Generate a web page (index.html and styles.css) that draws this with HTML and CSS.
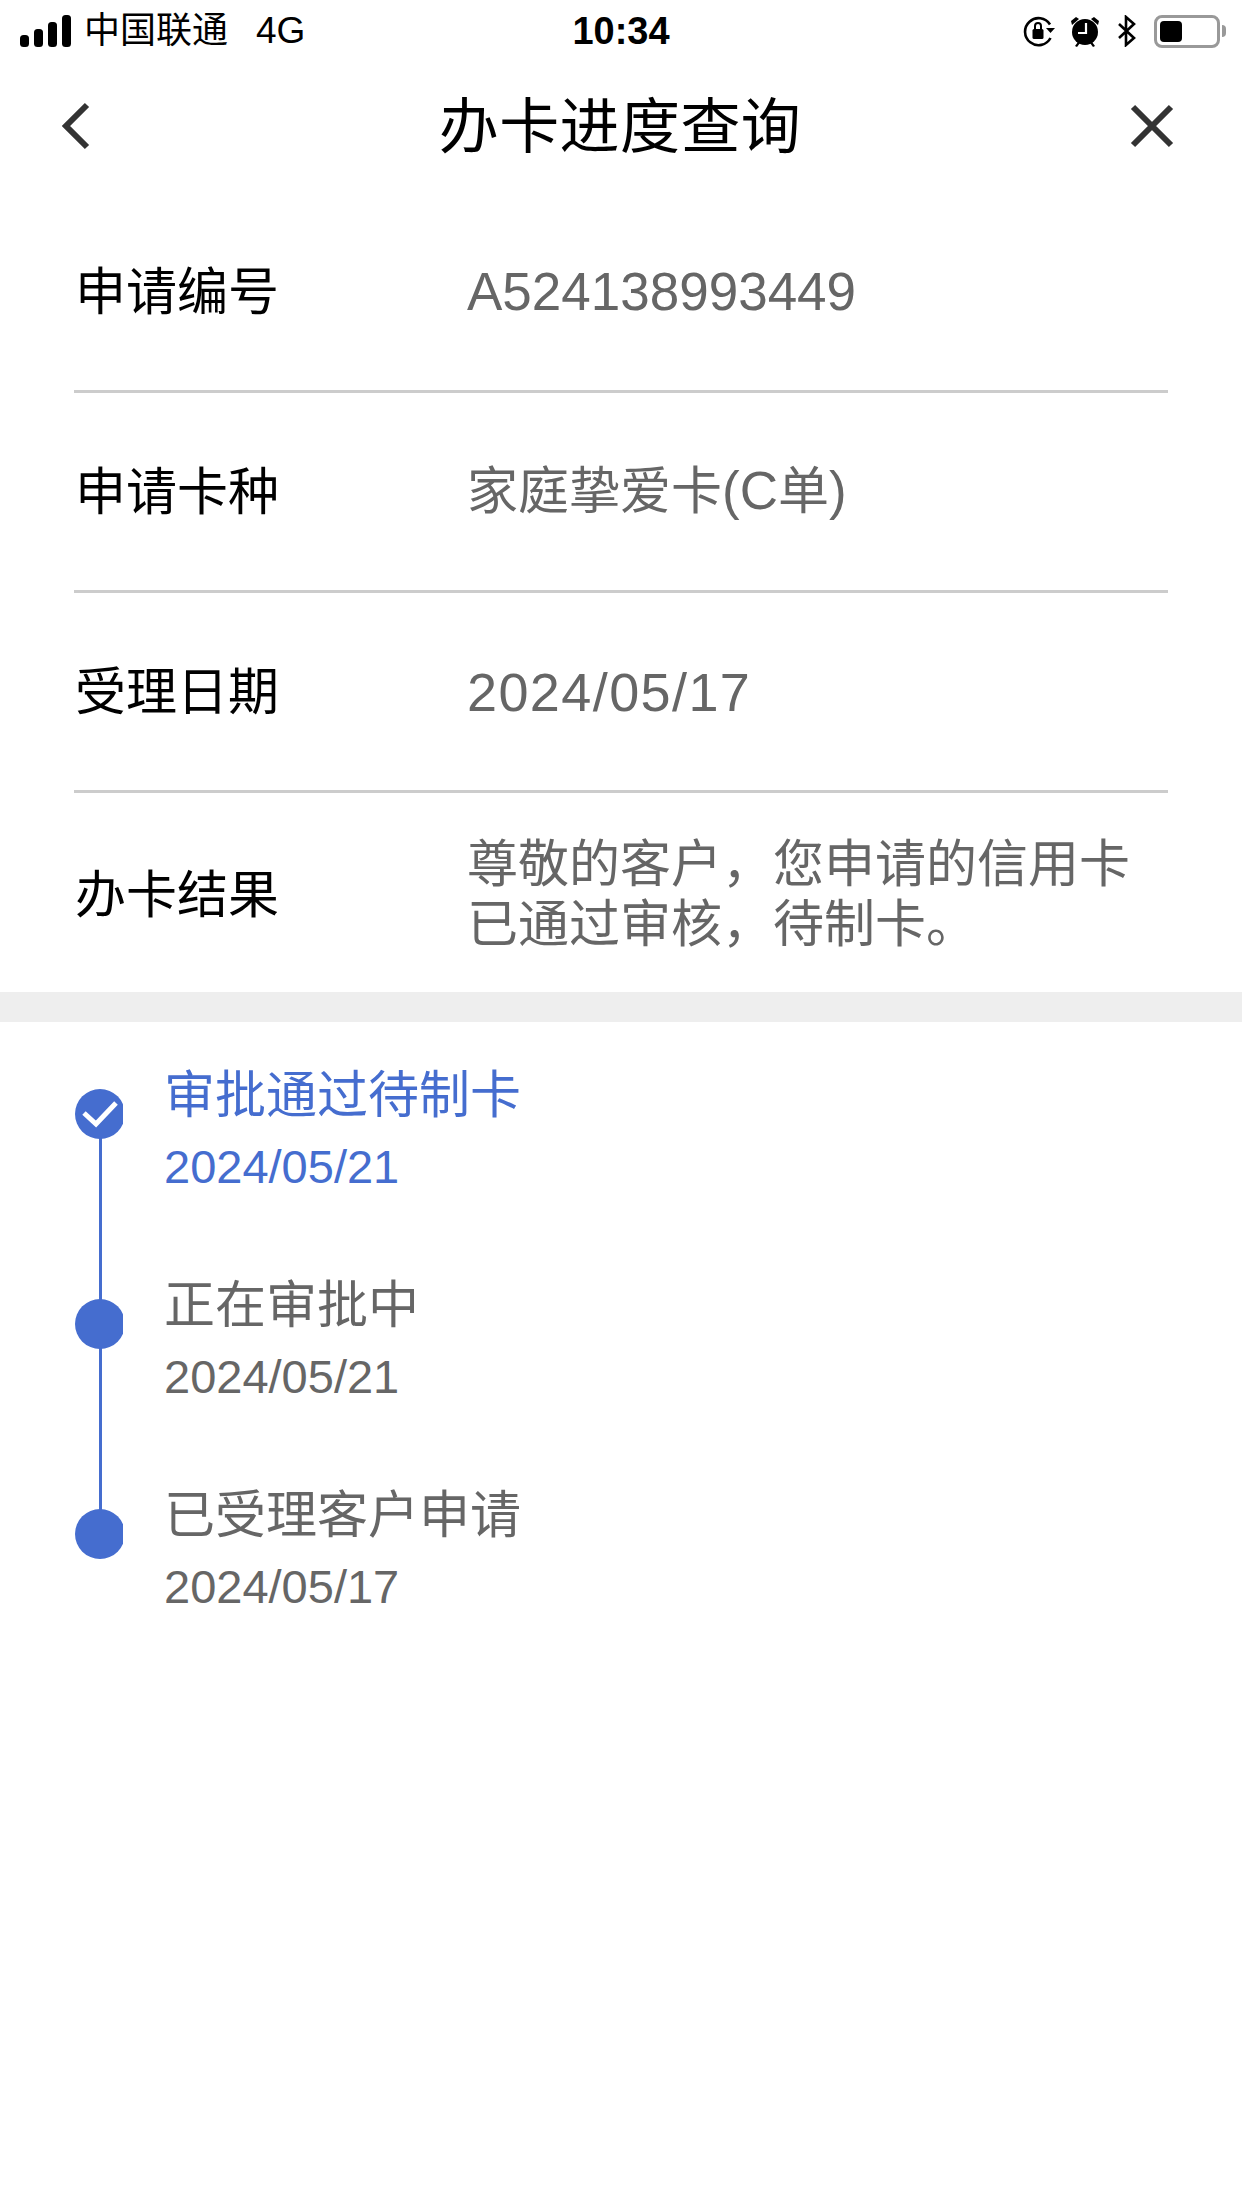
FILE: index.html
```html
<!DOCTYPE html>
<html lang="zh-CN">
<head>
<meta charset="utf-8">
<title>办卡进度查询</title>
<link rel="stylesheet" href="styles.css">
</head>
<body>
<div class="status">
  <div class="status-left">
    <svg class="signal" width="52" height="32" viewBox="0 0 52 32"><rect x="0" y="20" width="9" height="12" rx="3.5"/><rect x="14" y="14" width="9" height="18" rx="3.5"/><rect x="28" y="7" width="9" height="25" rx="3.5"/><rect x="42" y="0" width="9" height="32" rx="3.5"/></svg>
    <span class="carrier">中国联通</span><span class="net">4G</span>
  </div>
  <div class="clock">10:34</div>
  <div class="status-right">
    <svg class="ic-lock" width="32" height="32" viewBox="0 0 32 32"><path d="M27 9.500A13.500 13.500 0 1 0 27.500 23" fill="none" stroke="#000" stroke-width="2.600"/><path d="M23 13h9l-4.500 5z"/><rect x="9.500" y="14" width="11" height="10" rx="1.500"/><path d="M12 14v-3a3 3 0 0 1 6 0v3" fill="none" stroke="#000" stroke-width="2"/></svg>
    <svg class="ic-alarm" width="30" height="32" viewBox="0 0 30 32"><circle cx="15" cy="17" r="13"/><path d="M1 6l5-4 3 2-7 6zM29 6l-5-4-3 2 7 6zM5 31l3-4 2 1-3 4zM25 31l-3-4-2 1 3 4z"/><path d="M16 8v10H8" fill="none" stroke="#fff" stroke-width="2.200"/></svg>
    <svg class="ic-bt" width="20" height="32" viewBox="0 0 20 32"><path d="M2 9l15 14-8 7V2l8 7L2 23" fill="none" stroke="#000" stroke-width="2.600"/></svg>
    <div class="battery"><div class="battery-body"><div class="battery-fill"></div></div><div class="battery-tip"></div></div>
  </div>
</div>

<div class="nav">
  <svg class="nav-back" width="30" height="50" viewBox="0 0 30 50"><path d="M27 4L6 25l21 21" fill="none" stroke="#333" stroke-width="6"/></svg>
  <h1 class="nav-title">办卡进度查询</h1>
  <svg class="nav-close" width="46" height="46" viewBox="0 0 46 46"><path d="M4 4l38 38M42 4L4 42" fill="none" stroke="#333" stroke-width="6"/></svg>
</div>

<div class="info">
  <div class="row"><div class="label">申请编号</div><div class="value value-id">A524138993449</div></div>
  <div class="row"><div class="label">申请卡种</div><div class="value">家庭挚爱卡<span class="latin">(C</span>单<span class="latin">)</span></div></div>
  <div class="row"><div class="label">受理日期</div><div class="value value-date">2024/05/17</div></div>
  <div class="row row-last"><div class="label">办卡结果</div><div class="value">尊敬的客户，您申请的信用卡已通过审核，待制卡。</div></div>
</div>

<div class="band"></div>

<div class="timeline">
  <div class="step step-active">
    <div class="marker">
      <span class="dot"><svg width="36" height="28" viewBox="0 0 36 28"><path d="M2 13l12 11L34 3" fill="none" stroke="#fff" stroke-width="5"/></svg></span>
    </div>
    <div class="step-text"><div class="step-title">审批通过待制卡</div><div class="step-date">2024/05/21</div></div>
  </div>
  <div class="step">
    <div class="marker"><span class="dot"></span></div>
    <div class="step-text"><div class="step-title">正在审批中</div><div class="step-date">2024/05/21</div></div>
  </div>
  <div class="step step-last">
    <div class="marker"><span class="dot"></span></div>
    <div class="step-text"><div class="step-title">已受理客户申请</div><div class="step-date">2024/05/17</div></div>
  </div>
</div>
</body>
</html>
```
FILE: styles.css
```css
* { box-sizing: border-box; }
html, body { margin: 0; padding: 0; }
body {
  width: 1242px;
  height: 2208px;
  background: #fff;
  color: #000;
  font-family: "Liberation Sans", "Noto Sans CJK SC", sans-serif;
  overflow: hidden;
}
.status {
  height: 62px;
  padding: 0 16px 0 20px;
  display: flex;
  align-items: center;
  justify-content: space-between;
  position: relative;
}
.status-left { display: flex; align-items: center; }
.signal { margin-right: 12px; }
.carrier { font-size: 36px; margin-right: 28px; line-height: 40px; }
.net { font-size: 37px; line-height: 40px; }
.clock {
  position: absolute;
  left: 0; right: 0; top: 0;
  height: 62px;
  line-height: 62px;
  text-align: center;
  font-size: 38px;
  font-weight: 700;
}
.status-right { display: flex; align-items: center; }
.ic-lock { margin-right: 15px; }
.ic-alarm { margin-right: 17px; }
.ic-bt { margin-right: 17px; }
.battery { display: flex; align-items: center; }
.battery-body {
  width: 66px; height: 33px;
  border: 3px solid #999;
  border-radius: 8px;
  padding: 3px;
}
.battery-fill { width: 22px; height: 100%; background: #000; border-radius: 4px; }
.battery-tip {
  width: 4px; height: 12px;
  margin-left: 2px;
  background: #999;
  border-radius: 0 4px 4px 0;
}
.nav {
  height: 131px;
  padding: 0 67px 0 60px;
  display: grid;
  grid-template-columns: 1fr auto 1fr;
  align-items: center;
}
.nav-back { margin-bottom: 3px; }
.nav-close { justify-self: end; margin-bottom: 3px; }
.nav-title { margin: 0 0 0 5px; font-size: 60px; font-weight: 400; line-height: 80px; color: #000; letter-spacing: 0.4px; }
.info { padding: 0 74px; }
.row {
  height: 200px;
  display: flex;
  align-items: center;
  border-bottom: 3px solid #ccc;
}
.row-last { height: 199px; padding-top: 4px; border-bottom: 0; }
.label { width: 393px; font-size: 51px; line-height: 60px; color: #000; flex: none; padding: 3px 0 0 1px; }
.value { font-size: 51px; line-height: 60px; color: #666; flex: 1; }
.latin { font-size: 53px; }
.value-id { font-size: 53px; }
.value-date { font-size: 54px; letter-spacing: 1.4px; }
.band { height: 30px; background: #eee; }
.timeline { padding: 47px 0 0 75px; }
.step {
  height: 210px;
  display: flex;
  position: relative;
}
.marker { width: 48px; flex: none; position: relative; overflow: hidden; height: 210px; padding-top: 20px; }
.step::before {
  content: "";
  position: absolute;
  left: 24px;
  top: 45px;
  width: 3px;
  height: 210px;
  background: #456dcf;
}
.step-last::before { display: none; }
.dot {
  display: flex;
  align-items: center;
  justify-content: center;
  width: 50px; height: 50px;
  border-radius: 50%;
  background: #456dcf;
  position: relative;
}
.step-text { margin-left: 41px; margin-top: -3px; }
.step-title { font-size: 51px; line-height: 60px; color: #666; }
.step-date { font-size: 47px; line-height: 60px; color: #666; margin-top: 11px; }
.step-active .step-title, .step-active .step-date { color: #456dcf; }
```
